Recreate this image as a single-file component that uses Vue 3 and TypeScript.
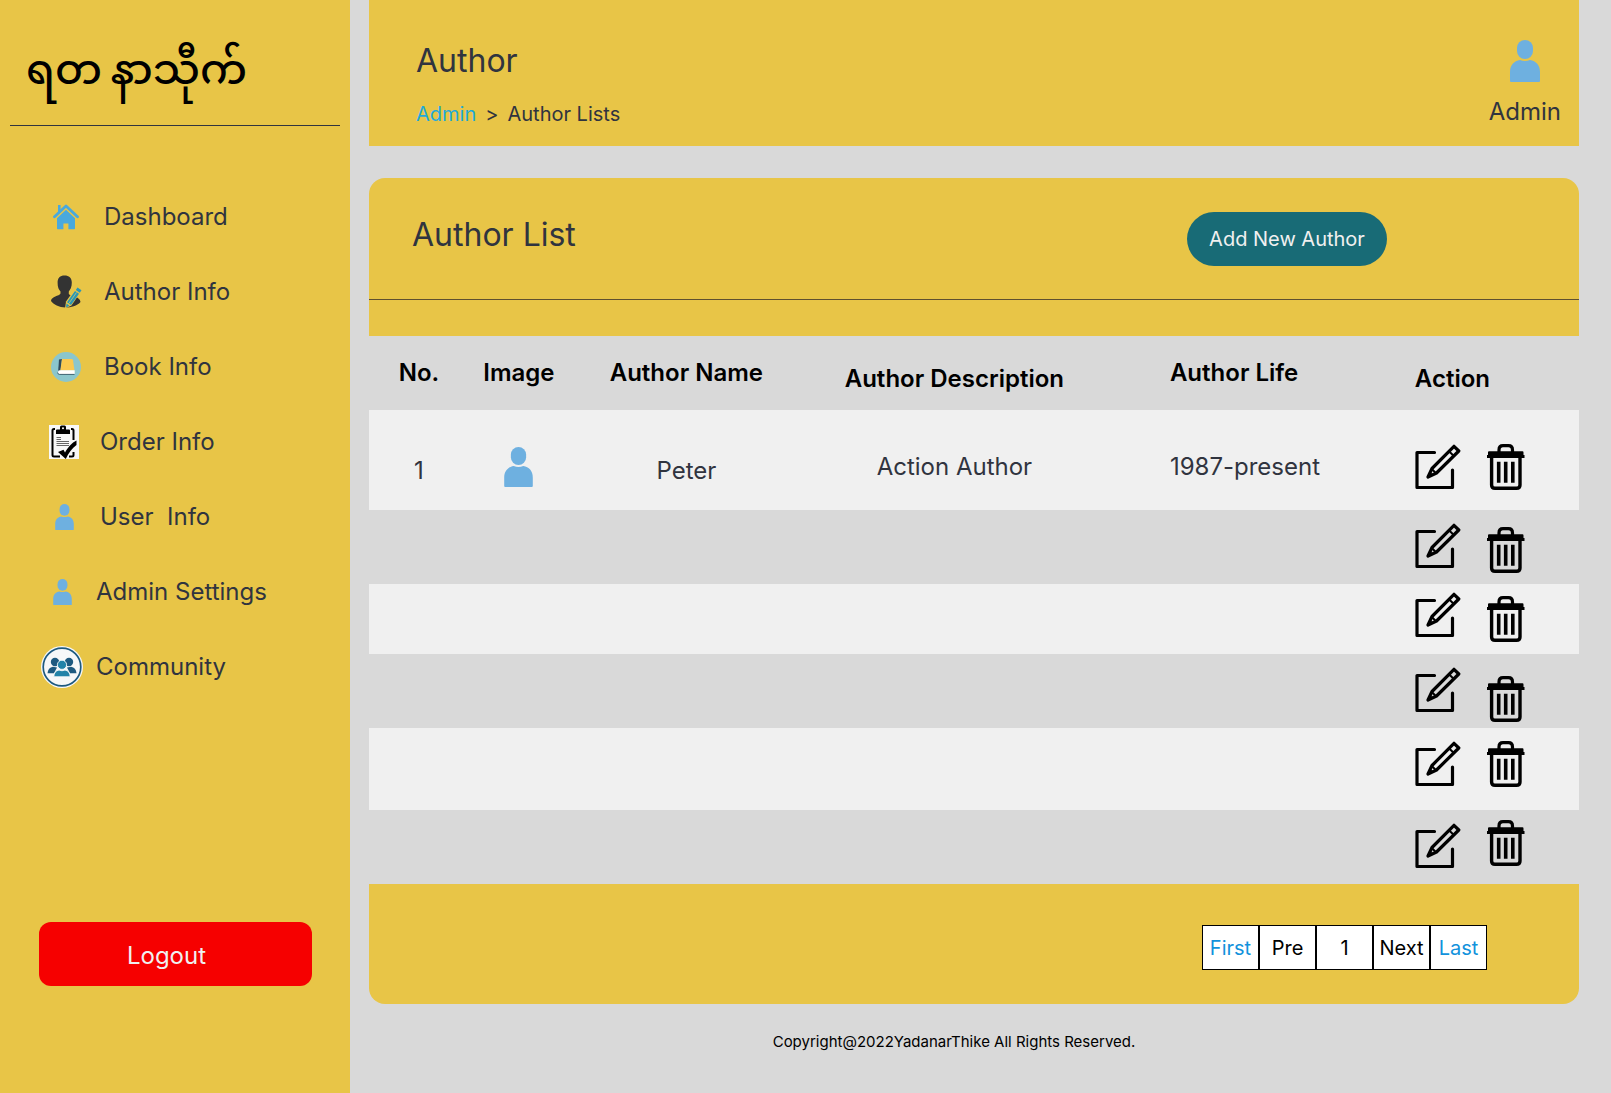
<script setup lang="ts">
interface NavItem {
  label: string
  icon: string
  width: number
  height: number
  slot: 'wide' | 'medium' | 'narrow'
}

interface AuthorRow {
  no: string
  name: string
  description: string
  life: string
  height: number
  actions: string
}

const navItems: NavItem[] = [
  { label: 'Dashboard', icon: 'home', width: 26, height: 26, slot: 'wide' },
  { label: 'Author Info', icon: 'writer', width: 32, height: 33, slot: 'wide' },
  { label: 'Book Info', icon: 'book', width: 30, height: 30, slot: 'wide' },
  { label: 'Order Info', icon: 'order', width: 30, height: 34, slot: 'medium' },
  { label: 'User  Info', icon: 'person', width: 19, height: 26, slot: 'medium' },
  { label: 'Admin Settings', icon: 'person', width: 19, height: 26, slot: 'narrow' },
  { label: 'Community', icon: 'community', width: 42, height: 42, slot: 'narrow' },
]

const blank = { no: '', name: '', description: '', life: '' }

const rows: AuthorRow[] = [
  { no: '1', name: 'Peter', description: 'Action Author', life: '1987-present', height: 100, actions: 'roomy' },
  { ...blank, height: 74, actions: 'slight' },
  { ...blank, height: 70, actions: 'slight tight' },
  { ...blank, height: 74, actions: 'spread' },
  { ...blank, height: 82, actions: '' },
  { ...blank, height: 74, actions: 'reverse' },
]

const pages = [
  { label: 'First', accent: true },
  { label: 'Pre', accent: false },
  { label: '1', accent: false },
  { label: 'Next', accent: false },
  { label: 'Last', accent: true },
]
</script>

<template>
  <svg class="sprite" width="0" height="0" aria-hidden="true">
    <symbol id="person" viewBox="0 0 30 42">
      <rect x="7" y="0" width="16" height="19" rx="8" fill="#6eb0e0" />
      <path d="M0 41V32C0 25 4 21 10 20Q15 22 20 20C26 21 30 25 30 32V41Q30 42 29 42H1Q0 42 0 41Z" fill="#6eb0e0" />
    </symbol>
    <symbol id="home" viewBox="0 0 26 26">
      <path d="M5 1h2.600v6L5 9.500Z" fill="#49a9dd" />
      <path d="M1.500 12.800L13 2L24.500 12.800" fill="none" stroke="#49a9dd" stroke-width="2.800" stroke-linecap="round" stroke-linejoin="round" />
      <path d="M4 14.200L13 5.800L22 14.200V24.600Q22 25.300 21.300 25.300H15.400V19.400H10.400V25.300H4.700Q4 25.300 4 24.600Z" fill="#49a9dd" />
    </symbol>
    <symbol id="writer" viewBox="0 0 32 33">
      <path d="M14.500 0.500C19 0.500 21.800 3 21.800 7.500C22 12 20 15 18.800 16.500V19C21 22 30 21 30.500 27C27 31 21 32.500 15.500 32.500C9 32.500 3.500 29.500 1 26C1.500 21 9 21.500 10.500 18.500V16.500C9 15 7.400 12 7.600 7.500C7.600 3 10 0.500 14.500 0.500Z" fill="#333" />
      <path d="M26.800 11.500L32 15L21.500 30.500L15 33.500L16 26.500Z" fill="#e8c547" />
      <path d="M27.500 12.500L31.500 15.200L29.800 17.700L25.800 15ZM25 16L29 18.700L21 30L17 27.300ZM16.500 28.500L19.500 30.800L16 32.600Z" fill="#2b97b5" />
      <path d="M26.500 17.500L18.800 28.500" stroke="#d8cf70" stroke-width="0.700" />
    </symbol>
    <symbol id="book" viewBox="0 0 30 30">
      <circle cx="15" cy="15" r="15" fill="#8bc6cc" />
      <path d="M8 7.500L11 7L9.500 19L7 21.500Z" fill="#2f4a5c" />
      <path d="M11 7H20.500Q21.800 7 22 8.300L23.500 18.500H9.300Z" fill="#fbc94f" />
      <path d="M7 19.500Q7.300 18.300 9 18.300H23.700V22H8Q7 22 7 20.500Z" fill="#fff" />
      <path d="M6.700 20.500Q6.700 22.400 8.500 22.400H23.500" fill="none" stroke="#2f4a5c" stroke-width="0.800" />
    </symbol>
    <symbol id="order" viewBox="0 0 30 34">
      <rect width="30" height="34" fill="#f8f8f8" />
      <path d="M6 4H5Q3.500 4 3.500 5.500V30Q3.500 31.500 5 31.500H11M22 4H23Q24.500 4 24.500 5.500V15M24.500 27V30Q24.500 31.500 23 31.500H20" fill="none" stroke="#000" stroke-width="2" />
      <path d="M7 9V5.500Q7 4.500 8 4.500H11V2Q11 .5 12.500 .5H15.500Q17 .5 17 2V4.500H20Q21 4.500 21 5.500V9Z" />
      <circle cx="14" cy="3.300" r="1" fill="#fff" />
      <path d="M7.500 12.500H12M7.500 14.500H12M7.500 16.500H20M7.500 18.500H20M7.500 20.500H20" stroke="#555" stroke-width="0.900" />
      <path d="M9 27L14.500 24.800L16 27.500C18.500 23 23 17.500 27.500 15.500V20C23 23.500 19.500 28 16.800 34Z" />
    </symbol>
    <symbol id="community" viewBox="0 0 42 42">
      <circle cx="21" cy="21" r="21" fill="#f6f8f9" />
      <circle cx="21" cy="21" r="18.800" fill="none" stroke="#1d5a80" stroke-width="1.700" />
      <g fill="#1d5a80">
        <circle cx="14" cy="16" r="4.200" />
        <circle cx="28" cy="16" r="4.200" />
        <path d="M6.500 27.300Q7 21.500 12 20.800L16 21.500L13 27.300Z" />
        <path d="M35.500 27.300Q35 21.500 30 20.800L26 21.500L29 27.300Z" />
      </g>
      <g fill="#2283a8" stroke="#f6f8f9" stroke-width="0.900">
        <circle cx="21" cy="18.800" r="4.600" />
        <path d="M12.800 30.800Q13 25 18 24Q21 25.500 24 24Q29 25 29.200 30.800Z" />
      </g>
    </symbol>
    <symbol id="edit" viewBox="0 0 46 46">
      <path d="M19.500 8.500H2V43.500H37.500V26" fill="none" stroke="#000" stroke-width="3.200" stroke-linecap="round" stroke-linejoin="round" />
      <path d="M13 33L17 24.500L39 2.300L43.800 7L21.500 29Z" fill="none" stroke="#000" stroke-width="3.200" stroke-linejoin="round" />
      <path d="M34 7.300L38.800 12M16.800 25L21 29.200" fill="none" stroke="#000" stroke-width="2" />
      <path d="M12.300 33.800L15 28L18 31Z" />
    </symbol>
    <symbol id="trash" viewBox="0 0 38 46">
      <path d="M12 8V6Q12 1.700 16 1.700H21.500Q25.500 1.700 25.500 6V8" fill="none" stroke="#000" stroke-width="3.200" />
      <path d="M2 7.200H35.500Q36.500 7.200 36.500 8.500V11H37.500V14H0V11H1V8.500Q1 7.200 2 7.200Z" />
      <path d="M4.600 13V41Q4.600 44.300 8 44.300H29.500Q33 44.300 33 41V13" fill="none" stroke="#000" stroke-width="3.400" />
      <path d="M11.700 17.700V38.700M18.700 17.700V38.700M25.800 17.700V38.700" stroke="#000" stroke-width="3.600" />
    </symbol>
  </svg>

  <div class="page">
    <aside class="sidebar">
      <div class="brand" lang="my">ရတ&#8201;နာသီုက်</div>
      <nav class="nav" aria-label="Main">
        <a v-for="item in navItems" :key="item.label" class="nav-link" href="#">
          <span class="nav-icon" :class="item.slot">
            <svg :width="item.width" :height="item.height" aria-hidden="true"><use :href="'#' + item.icon" /></svg>
          </span>
          <span class="nav-label">{{ item.label }}</span>
        </a>
      </nav>
      <button class="logout" type="button">Logout</button>
    </aside>

    <main class="main">
      <header class="topbar">
        <div>
          <h1 class="title">Author</h1>
          <nav class="crumbs" aria-label="Breadcrumb">
            <a href="#">Admin</a>
            <span>&gt;</span>
            <span>Author Lists</span>
          </nav>
        </div>
        <div class="account">
          <svg width="30" height="42" aria-hidden="true"><use href="#person" /></svg>
          <span>Admin</span>
        </div>
      </header>

      <section class="panel">
        <div class="panel-head">
          <h2 class="title">Author List</h2>
          <button class="add" type="button">Add New Author</button>
        </div>
        <div class="strip"></div>

        <table class="authors">
          <colgroup>
            <col class="col-no" />
            <col class="col-image" />
            <col class="col-name" />
            <col class="col-description" />
            <col class="col-life" />
            <col />
          </colgroup>
          <thead>
            <tr>
              <th scope="col">No.</th>
              <th scope="col">Image</th>
              <th scope="col">Author Name</th>
              <th scope="col" class="low">Author Description</th>
              <th scope="col" class="life">Author Life</th>
              <th scope="col" class="action low">Action</th>
            </tr>
          </thead>
          <tbody>
            <tr v-for="(row, index) in rows" :key="index" :style="{ height: row.height + 'px' }">
              <td class="low">{{ row.no }}</td>
              <td><svg v-if="row.name" class="avatar" width="29" height="40" role="img" :aria-label="row.name"><use href="#person" /></svg></td>
              <td class="low">{{ row.name }}</td>
              <td>{{ row.description }}</td>
              <td class="life">{{ row.life }}</td>
              <td class="action">
                <div class="actions" :class="row.actions">
                  <button class="icon-button edit" type="button" aria-label="Edit">
                    <svg width="46" height="46" aria-hidden="true"><use href="#edit" /></svg>
                  </button>
                  <button class="icon-button trash" type="button" aria-label="Delete">
                    <svg width="38" height="46" aria-hidden="true"><use href="#trash" /></svg>
                  </button>
                </div>
              </td>
            </tr>
          </tbody>
        </table>

        <nav class="pager" aria-label="Pages">
          <button v-for="page in pages" :key="page.label" class="page-button" :class="{ accent: page.accent }" type="button">{{ page.label }}</button>
        </nav>
      </section>

      <footer class="copyright">Copyright@2022YadanarThike All Rights Reserved.</footer>
    </main>
  </div>
</template>

<style>
body {
  margin: 0;
  background: #d9d9d9;
}
</style>

<style scoped>
* {
  box-sizing: border-box;
}

.sprite {
  position: absolute;
}

.page {
  display: flex;
  min-height: 100vh;
  background: #d9d9d9;
  color: #30343f;
  font-family: Inter, "Liberation Sans", sans-serif;
  font-size: 24px;
  line-height: 30px;
}

svg {
  display: block;
}

button {
  font: inherit;
  cursor: pointer;
}

a {
  color: inherit;
  text-decoration: none;
}

.sidebar {
  flex: none;
  display: flex;
  flex-direction: column;
  width: 350px;
  padding: 0 10px;
  background: #e8c547;
}

.brand {
  height: 126px;
  padding: 38px 16px 0;
  border-bottom: 1px solid #30343f;
  color: #000;
  font-family: "Noto Sans Myanmar", Padauk, "Noto Sans", sans-serif;
  font-size: 42px;
  font-weight: 500;
  line-height: 72px;
  white-space: nowrap;
}

.nav {
  padding: 53px 0 0 30px;
}

.nav-link {
  display: flex;
  align-items: center;
  gap: 12px;
  height: 75px;
}

.nav-icon {
  display: flex;
  justify-content: center;
}

.wide {
  width: 52px;
}

.medium {
  width: 48px;
}

.narrow {
  width: 44px;
}

.nav-label {
  white-space: pre;
}

.logout {
  height: 64px;
  margin: 218px 28px 0 29px;
  padding: 3px 18px 0 0;
  border: 0;
  border-radius: 12px;
  background: #f60000;
  color: #f0f0f0;
}

.main {
  flex: 1;
  min-width: 0;
  padding: 0 32px 0 19px;
}

.topbar {
  display: flex;
  justify-content: space-between;
  height: 146px;
  padding: 40px 18px 0 47px;
  background: #e8c547;
}

.title {
  margin: 0;
  font-size: 32px;
  font-weight: 400;
  line-height: 42px;
}

.crumbs {
  display: flex;
  gap: 9px;
  margin-top: 16px;
  font-size: 20px;
  line-height: 32px;
}

.crumbs a {
  color: #1eaad9;
}

.account {
  display: flex;
  flex-direction: column;
  align-items: center;
  gap: 15px;
}

.panel {
  margin-top: 32px;
  border-radius: 16px;
  background: #e8c547;
}

.panel-head {
  display: flex;
  align-items: center;
  justify-content: space-between;
  height: 122px;
  padding: 0 192px 0 43px;
  border-bottom: 1px solid #5f502f;
}

.panel-head .title {
  padding-bottom: 8px;
}

.add {
  width: 200px;
  height: 54px;
  border: 0;
  border-radius: 27px;
  background: #186b76;
  color: #f0f0f0;
  font-size: 20px;
  white-space: nowrap;
}

.strip {
  height: 36px;
}

.authors {
  width: 100%;
  border-spacing: 0;
  table-layout: fixed;
}

.col-no,
.col-image {
  width: 8.260%;
}

.col-name {
  width: 19.420%;
}

.col-description {
  width: 24.880%;
}

.col-life {
  width: 22.310%;
}

thead tr {
  height: 74px;
  background: #d9d9d9;
}

th {
  padding: 0;
  color: #000;
  font-weight: 600;
  text-align: center;
  white-space: nowrap;
}

tbody tr {
  background: #f0f0f0;
}

tbody tr:nth-child(even) {
  background: #d9d9d9;
}

td {
  padding: 14px 0 0;
  text-align: center;
}

td.low {
  padding-top: 22px;
}

th.low {
  padding-top: 12px;
}

.avatar {
  margin: 0 auto;
}

.authors .life {
  padding-left: 65px;
  text-align: left;
}

.authors .action {
  padding-left: 40px;
  text-align: left;
}

td.action {
  padding-top: 0;
  vertical-align: top;
}

.actions {
  display: flex;
  align-items: flex-start;
  gap: 26px;
  height: 46px;
  margin-top: 13px;
}

.actions.roomy {
  margin-top: 34px;
}

.actions.slight {
  height: 50px;
}

.actions.tight {
  margin-top: 8px;
}

.actions.spread {
  height: 55px;
}

.actions.reverse {
  height: 49px;
  margin-top: 10px;
}

.slight .trash,
.spread .trash,
.reverse .edit {
  align-self: flex-end;
}

.icon-button {
  flex: none;
  padding: 0;
  border: 0;
  background: none;
}

.pager {
  display: flex;
  justify-content: flex-end;
  height: 120px;
  padding: 41px 92px 0 0;
}

.page-button {
  width: 57px;
  height: 45px;
  padding: 0;
  border: 1px solid #000;
  background: #fff;
  color: #000;
  font-size: 20px;
}

.page-button.accent {
  color: #1292dc;
}

.copyright {
  padding: 23px 40px 24px 0;
  color: #000;
  font-size: 15px;
  text-align: center;
}
</style>
